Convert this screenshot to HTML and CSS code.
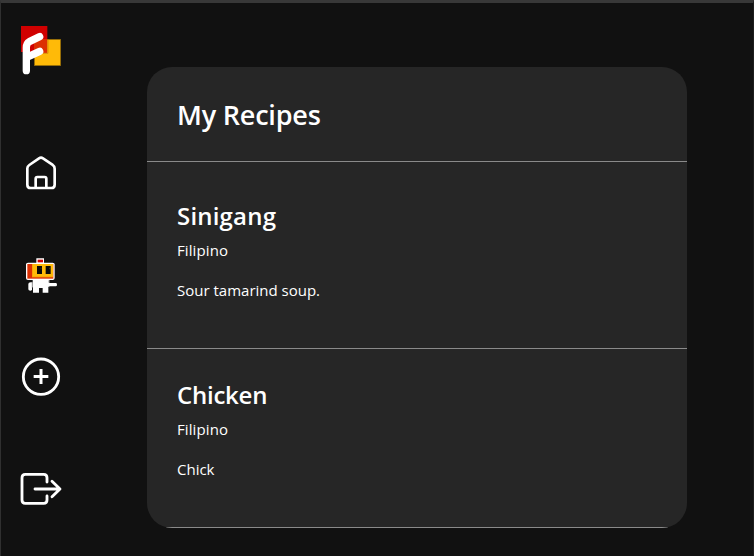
FILE: index.html
```html
<!DOCTYPE html>
<html lang="en">
<head>
<meta charset="utf-8">
<title>My Recipes</title>
<link rel="stylesheet" href="styles.css">
</head>
<body>
<div class="app">
  <nav class="sidebar">
    <svg class="logo" viewBox="0 0 192 210">
      <rect x="33" y="33" width="79" height="78" fill="#d00000"/>
      <rect x="73" y="73" width="79" height="79" fill="#ffba08" stroke="#8a6508" stroke-width="2"/>
      <path d="M72 72H112V114H72z" fill="#dc2f02"/>
      <path d="M98 115H114V74" fill="none" stroke="#d99008" stroke-width="3"/>
      <path d="M49 167V98Q49 85 58 80L89 65M50 127L89 109" fill="none" stroke="#fff" stroke-width="22" stroke-linecap="round" stroke-linejoin="round"/>
    </svg>
    <svg class="icon home" viewBox="0 0 192 180">
      <g fill="none" stroke="#fff" stroke-width="8" stroke-linejoin="round">
        <path d="M52 70Q52 64 58 60L87 40Q93 36 99 40L127 59Q134 64 134 71V119Q134 129 124 129H62Q52 129 52 119z"/>
        <path d="M77 128V101Q77 96 82 96H104Q109 96 109 101V128"/>
      </g>
    </svg>
    <svg class="icon robot" viewBox="0 0 192 180">
      <path d="M79 40H102V53H128Q134 53 134 58V99Q134 105 128 105H118V114H138Q141 114 141 119Q141 124 137 124H118V126H115V143H98V129H87V143H69V127H66V134Q65 137 61 137Q55 137 55 133V117Q55 113 62 112H68V105H54Q48 105 48 99V58Q48 53 54 53H79z" fill="#fff"/>
      <path d="M67 107V128M117 106V113M117 124V128" fill="none" stroke="#555" stroke-width="2"/>
      <rect x="83" y="44" width="16" height="8" fill="#d00000"/>
      <rect x="52" y="57" width="78" height="44" fill="#dc2f02"/>
      <path d="M66 57H129V97H66z" fill="#faa307"/>
      <path d="M69 57H129V94H69z" fill="#ffba08"/>
      <path d="M81 63H96V87H81zM107 63H122V87H107z" fill="#090909"/>
      <path d="M92 68H94V73H92zM118 68H120V73H118z" fill="#54420f"/>
    </svg>
    <svg class="icon add" viewBox="0 0 192 180">
      <circle cx="93" cy="95" r="53" fill="none" stroke="#fff" stroke-width="8.500"/>
      <path d="M93 72V117M71 94.500H115" stroke="#fff" stroke-width="9"/>
    </svg>
    <svg class="icon leave" viewBox="0 0 192 180">
      <path d="M111 66V53Q111 43 101 43H46Q36 43 36 53V120Q36 130 46 130H101Q111 130 111 120V108M75 87H149M126 64L150 87L126 110" fill="none" stroke="#fff" stroke-width="8.500" stroke-linecap="round" stroke-linejoin="round"/>
    </svg>
  </nav>
  <main class="card">
    <header class="card-header"><h1>My Recipes</h1></header>
    <article class="recipe first">
      <h2>Sinigang</h2>
      <p class="cuisine">Filipino</p>
      <p class="description">Sour tamarind soup.</p>
    </article>
    <article class="recipe second">
      <h2>Chicken</h2>
      <p class="cuisine">Filipino</p>
      <p class="description">Chick</p>
    </article>
  </main>
</div>
</body>
</html>
```
FILE: styles.css
```css
* { box-sizing: border-box; }
body {
  margin: 0;
  background: #111;
  color: #fff;
  font-family: "Open Sans", "Noto Sans", sans-serif;
}
.app {
  display: flex;
  align-items: flex-start;
  height: 556px;
  overflow: hidden;
  border-top: 3px solid #383838;
  border-left: 1px solid #303030;
  border-right: 1px solid #1d1d1d;
}
.sidebar {
  display: flex;
  flex-direction: column;
  width: 73px;
  padding: 12px 0 0 9px;
}
.logo { width: 64px; height: 70px; }
.icon { width: 64px; height: 60px; }
.home { margin-top: 60px; }
.robot, .add { margin-top: 40px; }
.leave { margin-top: 55px; }
.card {
  width: 540px;
  height: 461px;
  margin: 64px 0 0 73px;
  background: #262626;
  border-radius: 25px;
  overflow: hidden;
}
.card-header, .recipe {
  padding-left: 30px;
  border-bottom: 1px solid #8a8a8a;
}
h1, h2, p { margin: 0; white-space: nowrap; }
h1, h2 { font-weight: 600; }
.card-header { height: 95px; padding-top: 29px; }
h1 { font-size: 27px; line-height: 38px; letter-spacing: -0.2px; }
.first { height: 187px; padding-top: 37px; }
.second { height: 179px; padding-top: 29px; }
h2 { font-size: 24px; line-height: 34px; letter-spacing: -0.25px; }
.first h2 { letter-spacing: 0.2px; }
p { font-size: 15px; line-height: 22px; letter-spacing: 0; }
.cuisine { margin-top: 6px; letter-spacing: 0.1px; }
.description { margin-top: 18px; }
```
